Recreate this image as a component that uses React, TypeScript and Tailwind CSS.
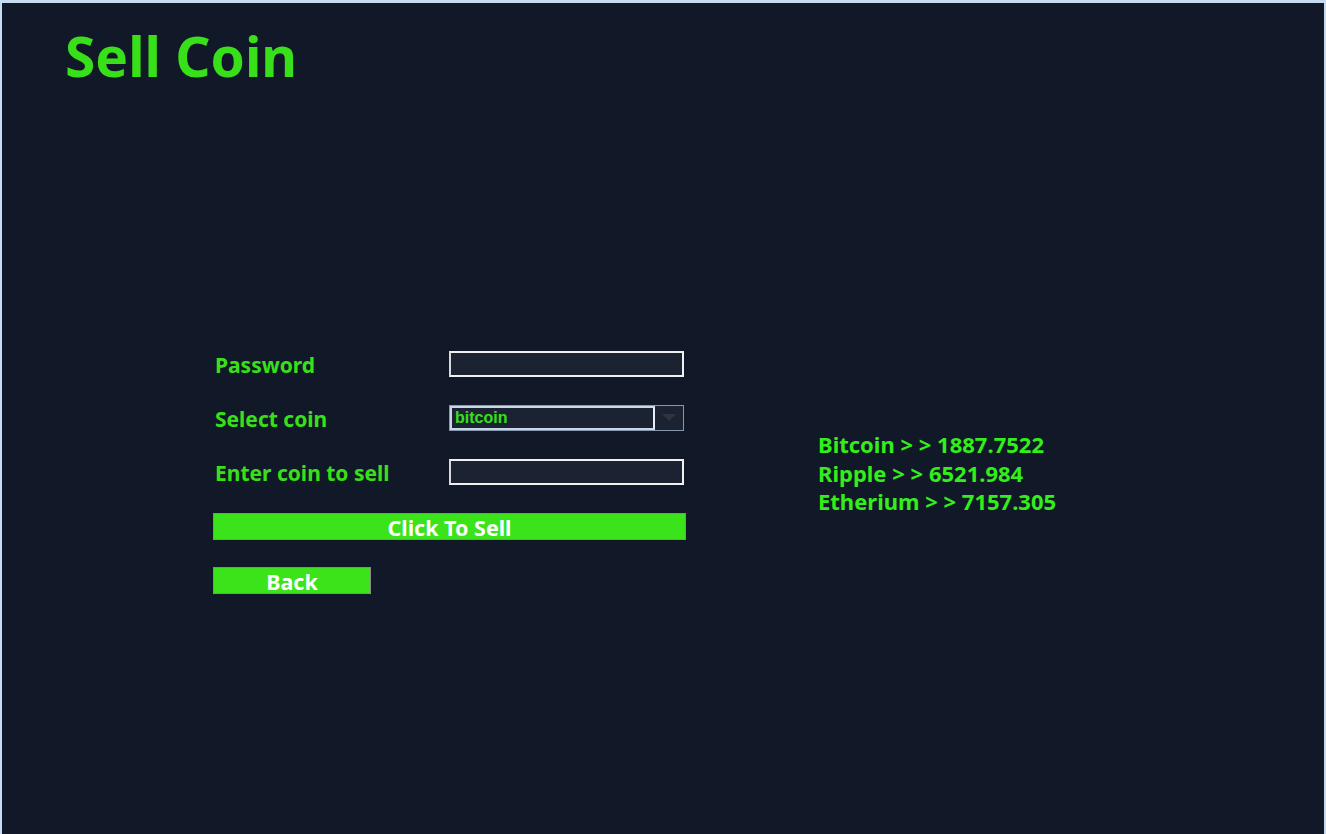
import { useState } from "react";

const prices = [
  { name: "Bitcoin", value: "1887.7522" },
  { name: "Ripple", value: "6521.984" },
  { name: "Etherium", value: "7157.305" },
];

function Field({ label, children }: { label: string; children: React.ReactNode }) {
  return (
    <div className="flex flex-row items-center h-[26px]">
      <div className="w-[236px] pl-[2px] text-[21px] font-bold text-[#38e01a] leading-none pt-[3px]">{label}</div>
      {children}
    </div>
  );
}

function App() {
  const [coin, setCoin] = useState("bitcoin");
  const inputCSS =
    "w-[235px] h-[26px] bg-[#1b2333] border-2 border-[#f0f0f0] border-l-[#d8d8d8] outline-none text-[#38e01a] px-1";

  return (
    <div
      className="w-full h-[834px] bg-[#111827] border-t-[3px] border-x-2 border-[#c6dbef] overflow-hidden"
      style={{ fontFamily: '"Noto Sans", "Open Sans", sans-serif' }}
    >
      <h1 className="ml-[63px] mt-[17px] text-[55px] font-bold leading-[72px] text-[#38e01a]">Sell Coin</h1>

      <div className="flex flew-row mt-[259px]">
        <div className="ml-[211px] w-[473px] flex flex-col">
          <div className="flex flex-col gap-[28px]">
            <Field label="Password">
              <input type="password" className={inputCSS} />
            </Field>
            <Field label="Select coin">
              <div className="flex flex-row w-[235px] h-[26px] border border-[#8797ad] bg-[#1b2333]">
                <div className="flex-1 border-2 border-[#c9d6e6] border-r-[#e6eef7] flex items-center px-[3px]">
                  <span
                    className="text-[#38e01a] text-[16px] font-bold"
                    style={{ fontFamily: '"Liberation Sans", Arial, sans-serif' }}
                  >
                    {coin}
                  </span>
                </div>
                <button
                  className="w-[28px] h-full flex items-center justify-center"
                  onClick={() => setCoin("bitcoin")}
                >
                  <svg width="14" height="8" viewBox="0 0 14 8">
                    <path d="M0 0 L14 0 L7 7 Z" fill="#2f3540" />
                  </svg>
                </button>
              </div>
            </Field>
            <Field label="Enter coin to sell">
              <input type="text" className={inputCSS} />
            </Field>
          </div>
          <button className="mt-[28px] w-[473px] h-[27px] bg-[#3ae31a] border border-[#8a8a8a] text-white text-[21.5px] font-bold leading-none flex items-center justify-center pt-[3px]">
            Click To Sell
          </button>
          <button className="mt-[27px] w-[158px] h-[27px] bg-[#3ae31a] border border-[#8a8a8a] text-white text-[21.5px] font-bold leading-none flex items-center justify-center pt-[3px]">
            Back
          </button>
        </div>

        <div className="ml-[132px] mt-[79px] flex flex-col">
          {prices.map((p) => (
            <div key={p.name} className="text-[22px] font-bold leading-[28.5px] text-[#33ee1a]">
              {p.name} {"> >"} {p.value}
            </div>
          ))}
        </div>
      </div>
    </div>
  );
}

export default App;
